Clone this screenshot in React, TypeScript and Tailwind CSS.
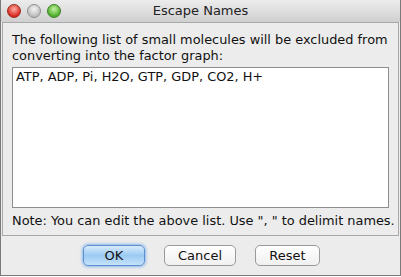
import React from "react";

const font = { fontFamily: '"Lucida Grande", "DejaVu Sans", sans-serif' };

function Light({ from, to, ring }: { from: string; to: string; ring: string }) {
  return (
    <span
      className="block h-[14px] w-[14px] rounded-full border"
      style={{ background: `radial-gradient(circle at 50% 35%, ${from}, ${to} 70%)`, borderColor: ring }}
    />
  );
}

export default function App() {
  return (
    <div className="h-[277px] w-[401px] overflow-hidden bg-white" style={font}>
      <div className="flex h-[276px] flex-col border-x border-b border-[#7a7a7a] bg-[#ececec]">
        <div className="relative flex h-[22px] items-center bg-gradient-to-b from-[#ececec] to-[#d0d0d0] px-[6px]">
          <div className="flex gap-[6px]">
            <Light from="#ffb1a8" to="#d8281e" ring="#9c2a22" />
            <Light from="#f4f4f4" to="#bdbdbd" ring="#8e8e8e" />
            <Light from="#c5f2a2" to="#4fae2c" ring="#3c7f22" />
          </div>
          <div className="absolute inset-0 flex items-center justify-center text-[13px] text-[#222]">Escape Names</div>
        </div>
        <div className="mx-[1px] flex h-[214px] flex-col border border-[#a9a9a9] bg-[#ececec] px-[9px] pt-[9px] text-[12.9px] leading-[16px] text-[#111]">
          <p className="whitespace-nowrap">The following list of small molecules will be excluded from</p>
          <p>converting into the factor graph:</p>
          <div className="mt-[3px] h-[141px] border border-[#8e8e8e] bg-white px-[3px] pt-[1px]">
            ATP, ADP, Pi, H2O, GTP, GDP, CO2, H+
          </div>
          <p className="mt-[5px] whitespace-nowrap">Note: You can edit the above list. Use ", " to delimit names.</p>
        </div>
        <div className="flex flex-1 items-start justify-center gap-[19px] pl-[2px] pt-[9px] text-[13px] text-[#111]">
          <button className="h-[21px] w-[62px] rounded-[5px] border border-[#5a8fd0] bg-gradient-to-b from-[#d8ebfb] via-[#9ccaf2] to-[#c5e2fa] shadow-[0_0_3px_1px_#8ab8ea]">
            OK
          </button>
          <button className="h-[21px] w-[72px] rounded-[5px] border border-[#9a9a9a] bg-gradient-to-b from-white to-[#f0f0f0]">
            Cancel
          </button>
          <button className="h-[21px] w-[65px] rounded-[5px] border border-[#9a9a9a] bg-gradient-to-b from-white to-[#f0f0f0]">
            Reset
          </button>
        </div>
      </div>
    </div>
  );
}
